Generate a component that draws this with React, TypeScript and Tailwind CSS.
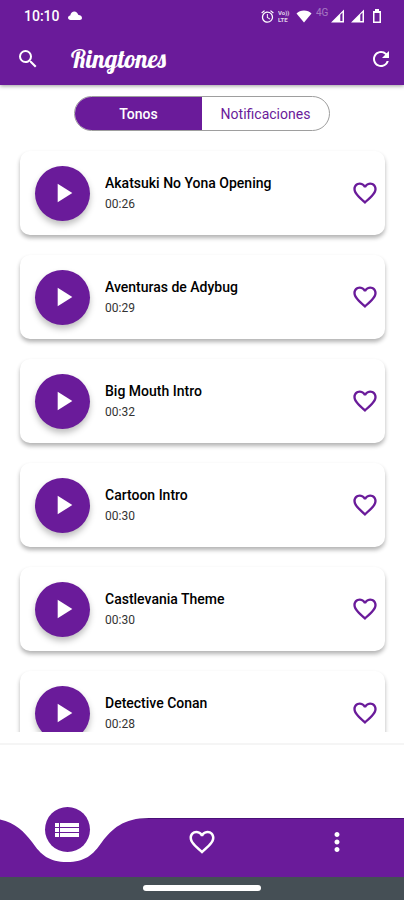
import React, { useState } from "react";
import {
  MdAlarm,
  MdFavoriteBorder,
  MdMoreVert,
  MdPlayArrow,
  MdRefresh,
  MdSearch,
} from "react-icons/md";

type Ringtone = {
  id: number;
  title: string;
  duration: string;
};

const ringtones: Ringtone[] = [
  { id: 1, title: "Akatsuki No Yona Opening", duration: "00:26" },
  { id: 2, title: "Aventuras de Adybug", duration: "00:29" },
  { id: 3, title: "Big Mouth Intro", duration: "00:32" },
  { id: 4, title: "Cartoon Intro", duration: "00:30" },
  { id: 5, title: "Castlevania Theme", duration: "00:30" },
  { id: 6, title: "Detective Conan", duration: "00:28" },
];

function SignalIcon() {
  return (
    <svg viewBox="0 0 14 14" className="h-[14px] w-[14px]" aria-hidden="true">
      <path
        d="M0 13.5L13 0.500v13zM9.300 5.800v6.200h2.200V3.600z"
        fill="currentColor"
        fillRule="evenodd"
      />
    </svg>
  );
}

function StatusBar() {
  return (
    <div className="flex h-8 items-center justify-between pl-6 pr-[22px]">
      <div className="flex items-center gap-2">
        <span className="text-sm font-medium">10:10</span>
        <svg viewBox="0 0 14 10" className="h-[10px] w-[14px]" aria-hidden="true">
          <path
            d="M2.500 9C1 9 0 8 0 6.800 0 5.500 1 4.600 2.200 4.500 2.800 2 4.400 0.500 6.300 0.500c2 0 3.300 1.300 3.900 3.200C12.400 4 14 5.200 14 7c0 1.200-.9 2-2.200 2z"
            fill="currentColor"
          />
        </svg>
      </div>
      <div className="flex items-center">
        <MdAlarm className="h-[15px] w-[15px]" />
        <div className="ml-[3px] w-[14px] text-[6px] font-bold leading-[7px] opacity-80">
          <p>Vo))</p>
          <p>LTE</p>
        </div>
        <svg viewBox="0 0 16 14" className="ml-[4px] h-[14px] w-4" aria-hidden="true">
          <path d="M8 13.500L0.500 4.500C4 0.500 12 0.500 15.500 4.500z" fill="currentColor" />
        </svg>
        <span className="-mt-[6px] ml-[4px] w-[15px] text-[10px] leading-[10px] opacity-40">
          4G
        </span>
        <SignalIcon />
        <div className="ml-[6px]">
          <SignalIcon />
        </div>
        <svg viewBox="0 0 10 14" className="ml-[7px] h-[14px] w-[10px]" aria-hidden="true">
          <path
            d="M3 0h4v2h2v12H1V2h2zM2.500 4v8.500h5V4z"
            fill="currentColor"
            fillRule="evenodd"
          />
        </svg>
      </div>
    </div>
  );
}

function RingtoneCard({ title, duration }: Ringtone) {
  return (
    <li className="flex h-[84px] shrink-0 items-center rounded-[10px] bg-white pl-[15px] pr-[6px] shadow-[0_3px_4px_rgba(0,0,0,0.3)]">
      <button
        type="button"
        aria-label={`Reproducir ${title}`}
        className="flex h-[55px] w-[55px] shrink-0 items-center justify-center rounded-full bg-[#6a1b9a] text-white shadow-[0_4px_6px_rgba(0,0,0,0.25)]"
      >
        <MdPlayArrow className="h-8 w-8" />
      </button>
      <div className="ml-[15px] min-w-0 flex-1">
        <h2 className="truncate text-sm font-medium leading-[22px] text-black">{title}</h2>
        <p className="text-xs leading-5 text-[#333333]">{duration}</p>
      </div>
      <button type="button" aria-label={`Favorito ${title}`} className="text-[#6a1b9a]">
        <MdFavoriteBorder className="h-7 w-7" />
      </button>
    </li>
  );
}

export default function App() {
  const [tab, setTab] = useState("tonos");

  return (
    <div className="flex h-screen flex-col bg-white font-['Roboto',sans-serif]">
      <header className="relative z-10 shrink-0 bg-[#6a1b9a] text-white shadow-[0_1px_4px_rgba(0,0,0,0.4)]">
        <StatusBar />
        <div className="flex h-[53px] items-center px-[11px]">
          <button type="button" aria-label="Buscar" className="p-[5px]">
            <MdSearch className="h-6 w-6" />
          </button>
          <h1 className="ml-[26px] flex-1 font-['Lobster','Liberation_Serif',serif] text-[25px] leading-8">
            Ringtones
          </h1>
          <button type="button" aria-label="Actualizar">
            <MdRefresh className="h-6 w-6" />
          </button>
        </div>
      </header>

      <div className="mx-auto mt-[11px] flex h-[35px] w-64 shrink-0 overflow-hidden rounded-full border border-[#9e9e9e] text-sm">
        <button
          type="button"
          onClick={() => setTab("tonos")}
          className={`flex-1 font-medium ${tab === "tonos" ? "bg-[#6a1b9a] text-white" : "text-[#6a1b9a]"}`}
        >
          Tonos
        </button>
        <button
          type="button"
          onClick={() => setTab("notificaciones")}
          className={`flex-1 ${tab === "notificaciones" ? "bg-[#6a1b9a] text-white" : "text-[#6a1b9a]"}`}
        >
          Notificaciones
        </button>
      </div>

      <ul className="mt-3 flex min-h-0 flex-1 flex-col gap-5 overflow-y-auto pl-5 pr-[19px] pt-2 [scrollbar-width:none]">
        {ringtones.map((ringtone) => (
          <RingtoneCard key={ringtone.id} {...ringtone} />
        ))}
      </ul>

      {/* ad banner slot */}
      <div className="mt-[11px] h-[75px] shrink-0 border-t-2 border-[#f5f5f5]" />

      <nav className="grid h-[59px] shrink-0 grid-cols-3 border-t border-[#4a0f78] bg-[#6a1b9a] text-white">
        <div className="relative flex justify-center">
          <svg
            viewBox="0 0 164 46"
            className="absolute -top-[2px] left-1/2 h-[46px] w-[164px] -translate-x-1/2"
            aria-hidden="true"
          >
            <path
              d="M164 0V1C138 1 127 12 117 25C108 38 100 45 82 45C64 45 56 38 47 25C37 12 26 1 0 1V0z"
              fill="#ffffff"
            />
          </svg>
          <button
            type="button"
            aria-label="Lista"
            className="relative -mt-3 flex h-[45px] w-[45px] items-center justify-center rounded-full bg-[#6a1b9a]"
          >
            <svg viewBox="0 0 24 14" className="h-[14px] w-6" aria-hidden="true">
              <path
                d="M0 0h4v4H0zM5 0h19v4H5zM0 5h4v4H0zM5 5h19v4H5zM0 10h4v4H0zM5 10h19v4H5z"
                fill="currentColor"
              />
            </svg>
          </button>
        </div>
        <button type="button" aria-label="Favoritos" className="flex justify-center pt-[8px]">
          <MdFavoriteBorder className="h-[30px] w-[30px]" />
        </button>
        <button type="button" aria-label="Más" className="flex justify-center pt-[8px]">
          <MdMoreVert className="h-[30px] w-[30px]" />
        </button>
      </nav>

      <div className="flex h-[23px] shrink-0 justify-center bg-[#454f55] pt-2">
        <div className="h-[6px] w-[118px] rounded-full bg-white" />
      </div>
    </div>
  );
}
